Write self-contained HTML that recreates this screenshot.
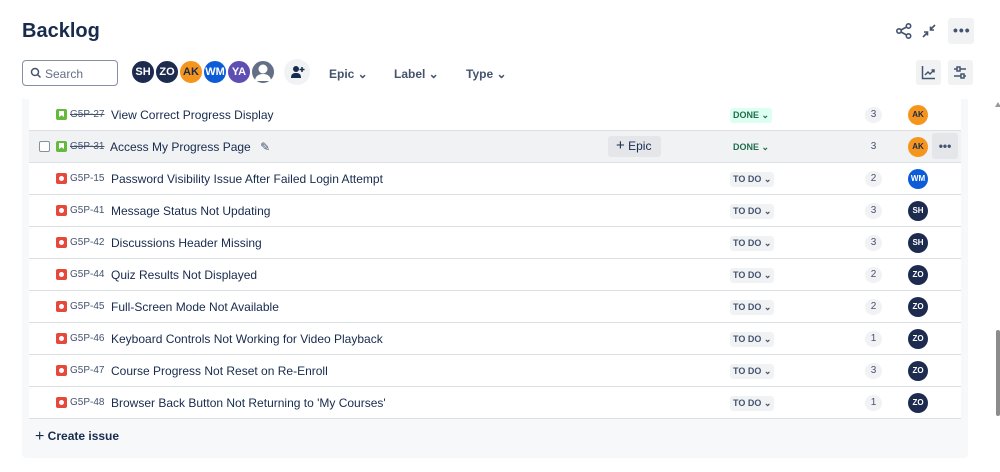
<!DOCTYPE html>
<html><head><style>
*{box-sizing:border-box;margin:0;padding:0}
body{width:1000px;height:472px;background:#fff;font-family:"Liberation Sans",sans-serif;color:#172b4d;position:relative;overflow:hidden}
.abs{position:absolute}
h1{position:absolute;left:22px;top:20px;font-size:20px;font-weight:600;color:#172b4d}
.search{left:22px;top:60px;width:96px;height:26px;border:1px solid #8590a2;border-radius:4px;font-size:12px;color:#626f86;padding:6px 0 0 22px}
.av{position:absolute;width:26px;height:26px;border-radius:50%;border:2px solid #fff;color:#fff;font-size:11px;text-align:center;line-height:22px;font-weight:600}
.flt{position:absolute;top:67px;font-size:12px;font-weight:600;color:#44546f}
.btn{position:absolute;width:25px;height:25px;background:#f1f2f4;border-radius:3px}
.panel{left:22px;top:99px;width:946px;height:359px;background:#f7f8f9;border-radius:0 0 4px 4px}
.row{position:absolute;left:29px;width:932px;height:32px;background:#fff;border-bottom:1px solid #dcdfe4;font-size:12px}
.row.hl{background:#f1f2f4}
.ic{position:absolute;left:27px;top:10px;width:11px;height:11px;border-radius:2px}
.ic.s{background:#63ba3c}.ic.b{background:#e5493a}
.ic.b::after{content:"";position:absolute;left:3px;top:3px;width:5px;height:5px;border-radius:50%;background:#fff}
.ic.s::after{content:"";position:absolute;left:3px;top:2px;width:5px;height:6px;background:#fff;clip-path:polygon(0 0,100% 0,100% 100%,50% 70%,0 100%)}
.key{position:absolute;left:41px;top:10px;font-size:10px;color:#44546f}
.key.d{text-decoration:line-through}
.t{position:absolute;left:82px;top:9px;color:#172b4d}
.st{position:absolute;left:701px;top:9px;height:15px;padding:2px 3px;font-size:9px;font-weight:700;border-radius:3px}
.st.done{background:#dcfff1;color:#216e4e}.st.todo{background:#f1f2f4;color:#44546f}
.pts{position:absolute;left:836px;top:8px;width:17px;height:16px;border-radius:8px;background:#f1f2f4;font-size:10px;color:#44546f;text-align:center;line-height:16px}
.ra{position:absolute;left:879px;top:6px;width:20px;height:20px;border-radius:50%;color:#fff;font-size:8px;font-weight:600;text-align:center;line-height:20px}
</style></head><body>
<h1>Backlog</h1>
<svg class="abs" style="left:895px;top:22px" width="18" height="18" viewBox="0 0 18 18" fill="none" stroke="#44546f" stroke-width="1.6"><circle cx="4" cy="9" r="2.2"/><circle cx="13.5" cy="4" r="2.2"/><circle cx="13.5" cy="14" r="2.2"/><path d="M6 8l5.5-3M6 10l5.5 3"/></svg>
<svg class="abs" style="left:921px;top:23px" width="16" height="16" viewBox="0 0 16 16" fill="none" stroke="#44546f" stroke-width="1.6"><path d="M2 14l4-4M3 9h3.5v3.5M14 2l-4 4M13 7H9.5V3.5"/></svg>
<div class="btn" style="left:948px;top:18px;width:26px;height:26px"></div>
<div class="abs" style="left:953px;top:22px;font-size:14px;font-weight:700;color:#44546f;letter-spacing:1px">•••</div>
<div class="abs search">Search</div>
<svg class="abs" style="left:30px;top:67px" width="12" height="12" viewBox="0 0 12 12" fill="none" stroke="#44546f" stroke-width="1.5"><circle cx="5" cy="5" r="3.5"/><path d="M7.5 7.5l3 3"/></svg>
<div class="av" style="left:130px;top:59px;background:#1d2b4f">SH</div>
<div class="av" style="left:154px;top:59px;background:#1d2b4f">ZO</div>
<div class="av" style="left:178px;top:59px;background:#f5951d;color:#172b4d">AK</div>
<div class="av" style="left:202px;top:59px;background:#0c5cd8">WM</div>
<div class="av" style="left:226px;top:59px;background:#5e4db2">YA</div>
<div class="av" style="left:250px;top:59px;background:#626f86"><svg width="22" height="22" viewBox="0 0 22 22"><circle cx="11" cy="8" r="4.5" fill="#fff"/><path d="M3 20c0-5 4-7 8-7s8 2 8 7z" fill="#fff"/></svg></div>
<div class="abs" style="left:284px;top:59px;width:26px;height:26px;border-radius:50%;background:#f1f2f4"></div>
<svg class="abs" style="left:290px;top:64px" width="16" height="16" viewBox="0 0 16 16" fill="#172b4d"><circle cx="6" cy="5" r="3"/><path d="M1 14c0-4 2-5 5-5s5 1 5 5z"/><path d="M12 3v5M9.5 5.5h5" stroke="#172b4d" stroke-width="1.5"/></svg>
<div class="flt" style="left:329px">Epic ⌄</div>
<div class="flt" style="left:394px">Label ⌄</div>
<div class="flt" style="left:466px">Type ⌄</div>
<div class="btn" style="left:916px;top:60px"></div>
<svg class="abs" style="left:921px;top:65px" width="15" height="15" viewBox="0 0 15 15" fill="none" stroke="#44546f" stroke-width="1.5"><path d="M1.5 1v12.5H14M4 10l3-3 2 2 4-4M10.5 5H13v2.5"/></svg>
<div class="btn" style="left:948px;top:60px"></div>
<svg class="abs" style="left:953px;top:65px" width="15" height="15" viewBox="0 0 15 15" fill="none" stroke="#44546f" stroke-width="1.5"><path d="M1 4h12M1 11h12"/><rect x="4" y="2" width="3" height="4" fill="#f1f2f4"/><rect x="8" y="9" width="3" height="4" fill="#f1f2f4"/></svg>
<div class="abs panel"></div>
<div class="abs" style="left:996px;top:330px;width:4px;height:86px;background:#8c8c8c;border-radius:2px"></div>
<div class="abs" style="left:995px;top:102px;width:0;height:0;border-left:3px solid transparent;border-right:3px solid transparent;border-bottom:5px solid #999"></div>

<div class="row" style="top:99px;height:32px"><div class="ic s"></div><div class="key d">G5P-27</div><div class="t">View Correct Progress Display</div><div class="st done">DONE ⌄</div><div class="pts">3</div><div class="ra" style="background:#f5951d;color:#172b4d">AK</div></div>
<div class="row hl" style="top:131px"><div class="abs" style="left:10px;top:10px;width:11px;height:11px;border:1px solid #8590a2;border-radius:2px;background:#fff"></div><div class="ic s"></div><div class="key d">G5P-31</div><div class="t" style="left:81px">Access My Progress Page <span style="color:#44546f;margin-left:6px">✎</span></div><div class="abs" style="left:579px;top:5px;width:53px;height:21px;background:#e4e6ea;border-radius:3px;font-size:12px;padding:3px 0 0 8px"><b style="font-weight:400;font-size:15px;line-height:12px">+</b> Epic</div><div class="st done" style="background:none">DONE ⌄</div><div class="pts">3</div><div class="ra" style="background:#f5951d;color:#172b4d">AK</div><div class="abs" style="left:903px;top:2px;width:26px;height:26px;background:#e4e6ea;border-radius:3px;font-size:12px;font-weight:700;color:#44546f;text-align:center;line-height:26px">•••</div></div>
<div class="row" style="top:163px"><div class="ic b"></div><div class="key">G5P-15</div><div class="t">Password Visibility Issue After Failed Login Attempt</div><div class="st todo">TO DO ⌄</div><div class="pts">2</div><div class="ra" style="background:#0c5cd8">WM</div></div>
<div class="row" style="top:195px"><div class="ic b"></div><div class="key">G5P-41</div><div class="t">Message Status Not Updating</div><div class="st todo">TO DO ⌄</div><div class="pts">3</div><div class="ra" style="background:#1d2b4f">SH</div></div>
<div class="row" style="top:227px"><div class="ic b"></div><div class="key">G5P-42</div><div class="t">Discussions Header Missing</div><div class="st todo">TO DO ⌄</div><div class="pts">3</div><div class="ra" style="background:#1d2b4f">SH</div></div>
<div class="row" style="top:259px"><div class="ic b"></div><div class="key">G5P-44</div><div class="t">Quiz Results Not Displayed</div><div class="st todo">TO DO ⌄</div><div class="pts">2</div><div class="ra" style="background:#1d2b4f">ZO</div></div>
<div class="row" style="top:291px"><div class="ic b"></div><div class="key">G5P-45</div><div class="t">Full-Screen Mode Not Available</div><div class="st todo">TO DO ⌄</div><div class="pts">2</div><div class="ra" style="background:#1d2b4f">ZO</div></div>
<div class="row" style="top:323px"><div class="ic b"></div><div class="key">G5P-46</div><div class="t">Keyboard Controls Not Working for Video Playback</div><div class="st todo">TO DO ⌄</div><div class="pts">1</div><div class="ra" style="background:#1d2b4f">ZO</div></div>
<div class="row" style="top:355px"><div class="ic b"></div><div class="key">G5P-47</div><div class="t">Course Progress Not Reset on Re-Enroll</div><div class="st todo">TO DO ⌄</div><div class="pts">3</div><div class="ra" style="background:#1d2b4f">ZO</div></div>
<div class="row" style="top:387px"><div class="ic b"></div><div class="key">G5P-48</div><div class="t">Browser Back Button Not Returning to 'My Courses'</div><div class="st todo">TO DO ⌄</div><div class="pts">1</div><div class="ra" style="background:#1d2b4f">ZO</div></div>
<div class="abs" style="left:35px;top:428px;font-size:12px;font-weight:600;color:#172b4d"><span style="font-size:16px;font-weight:400;vertical-align:-1px">+</span> Create issue</div>
</body></html>
